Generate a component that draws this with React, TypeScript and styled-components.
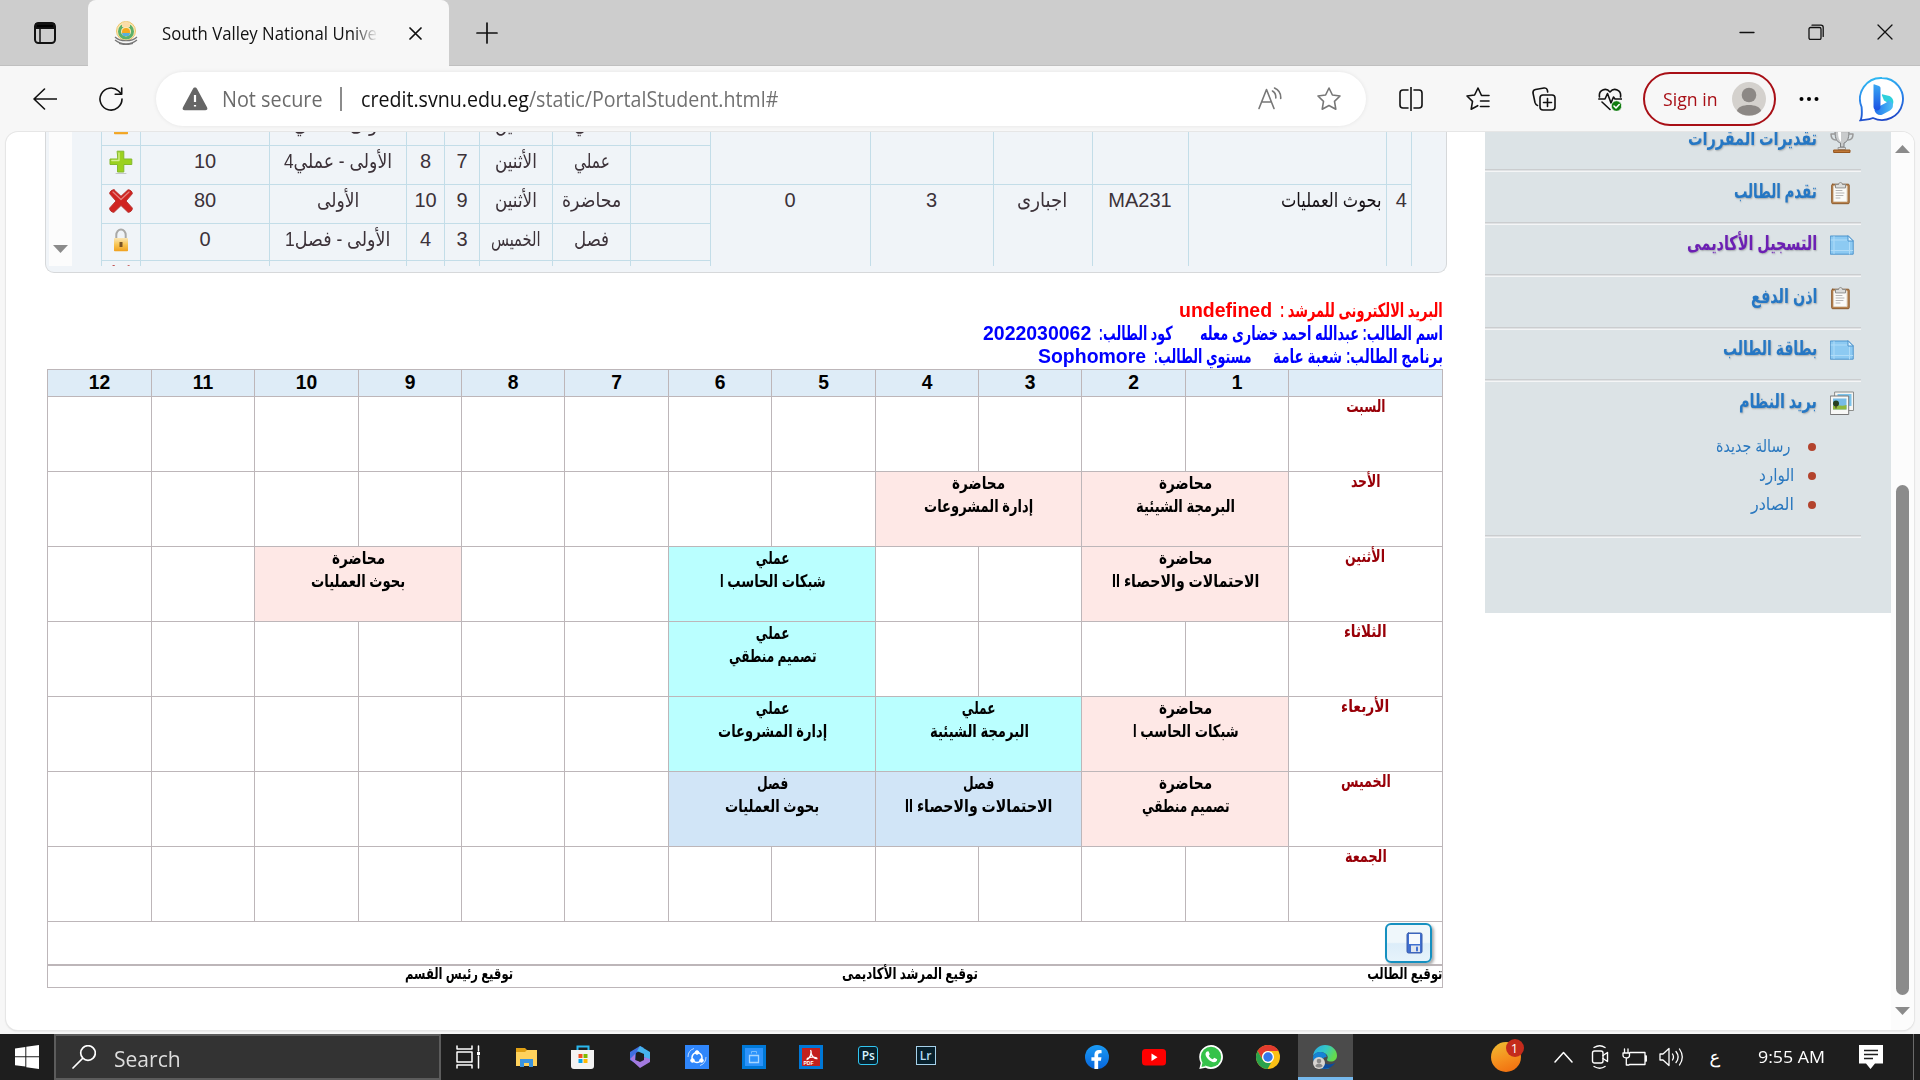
import React, { useLayoutEffect, useRef, useState } from 'react';
import styled, { createGlobalStyle, css } from 'styled-components';
import { FaFacebookF } from 'react-icons/fa';

const ARABIC = '"Liberation Sans", "DejaVu Sans", sans-serif';
const UI = '"Open Sans", "Noto Sans", "DejaVu Sans", sans-serif';

const GlobalStyle = createGlobalStyle`
  * { box-sizing: border-box; }
  html, body { margin: 0; padding: 0; background: #f7f7f7; overflow: hidden; }
  svg { display: block; flex: none; }
`;

/* ---------- text set to a known measure ---------- */

const Measure = styled.span<{ $w: number; $rtl?: boolean }>`
  display: inline-block;
  flex: none;
  width: ${p => p.$w}px;
  direction: ${p => (p.$rtl ? 'rtl' : 'ltr')};
  text-align: ${p => (p.$rtl ? 'right' : 'left')};
  white-space: nowrap;
`;
const Run = styled.span<{ $rtl?: boolean }>`
  display: inline-block;
  white-space: nowrap;
  transform-origin: ${p => (p.$rtl ? 'right' : 'left')} center;
`;

function Fit({ w, rtl, children }: { w: number; rtl?: boolean; children: React.ReactNode }) {
  const ref = useRef<HTMLSpanElement>(null);
  const [scale, setScale] = useState(1);
  useLayoutEffect(() => {
    if (ref.current && ref.current.offsetWidth) setScale(w / ref.current.offsetWidth);
  }, [w]);
  return (
    <Measure $w={w} $rtl={rtl}>
      <Run ref={ref} $rtl={rtl} style={{ transform: `scaleX(${scale})` }}>{children}</Run>
    </Measure>
  );
}

/* ---------- browser chrome ---------- */

const Screen = styled.div`
  width: 1920px;
  height: 1080px;
  display: flex;
  flex-direction: column;
  background: #f7f7f7;
  font-family: ${UI};
  overflow: hidden;
`;
const TabStrip = styled.div`
  height: 66px;
  flex: none;
  display: flex;
  background: #cdcdcd;
  box-shadow: inset 0 -1px 0 #c0c0c0;
`;
const TabActions = styled.div`
  width: 88px;
  padding: 22px 0 0 34px;
`;
const Tab = styled.div`
  width: 361px;
  height: 66px;
  display: flex;
  align-items: flex-start;
  background: #f7f7f7;
  border-radius: 8px 8px 0 0;
  padding: 21px 27px 0 26px;
`;
const TabTitle = styled.div`
  width: 216px;
  height: 26px;
  margin-left: 24px;
  font-size: 18px;
  line-height: 24px;
  color: #111;
  overflow: hidden;
  mask-image: linear-gradient(to right, #000 88%, transparent 100%);
`;
const TabClose = styled.div`
  margin: 6px 0 0 31px;
`;
const NewTab = styled.div`
  margin: 22px 0 0 27px;
`;
const WindowButtons = styled.div`
  margin-left: auto;
  display: flex;
  gap: 53px;
  padding: 24px 27px 0 0;
`;
const Toolbar = styled.div`
  height: 66px;
  flex: none;
  display: flex;
  align-items: center;
`;
const Tool = styled.div<{ $before: number }>`
  flex: none;
  margin-left: ${p => p.$before}px;
`;
const AddressBar = styled.div`
  flex: none;
  width: 1210px;
  height: 54px;
  margin-left: 33px;
  padding: 0 25px 0 26px;
  display: flex;
  align-items: center;
  background: #fff;
  border-radius: 27px;
  box-shadow: 0 0 4px rgba(0, 0, 0, 0.08);
  font-size: 21px;
  line-height: 28px;
`;
const Security = styled.div`
  margin-left: 14px;
  color: #6b6b6b;
`;
const Bar = styled.div`
  width: 2px;
  height: 24px;
  background: #8b8b8b;
  margin: 0 19px 0 17px;
`;
const Host = styled.span`
  color: #111;
`;
const UrlPath = styled.span`
  color: #717171;
`;
const AddressTools = styled.div`
  margin-left: auto;
  display: flex;
  gap: 35px;
`;
const SignIn = styled.div`
  flex: none;
  width: 133px;
  height: 54px;
  margin-left: 21px;
  padding: 0 8px 0 18px;
  display: flex;
  align-items: center;
  justify-content: space-between;
  border: 2px solid #a80f16;
  border-radius: 27px;
  color: #a80f16;
  font-size: 18px;
  line-height: 24px;
`;

/* ---------- page ---------- */

const Viewport = styled.div`
  width: 1908px;
  height: 898px;
  flex: none;
  margin: 0 6px 4px;
  display: flex;
  align-items: flex-start;
  background: #fff;
  border-radius: 12px;
  box-shadow: 0 0 0 1px #e6e6e6, 0 1px 2px #ccc;
  overflow: hidden;
`;
const Main = styled.div`
  width: 1479px;
  height: 898px;
  flex: none;
  padding-left: 39px;
`;
const RegistrationPanel = styled.div`
  width: 1402px;
  height: 141px;
  display: flex;
  padding-left: 3px;
  background: #f0f4f8;
  border: solid #d6d8da;
  border-width: 0 1px 1px;
  border-radius: 0 0 9px 9px;
  font-family: ${ARABIC};
  font-size: 20px;
  line-height: 24px;
  color: #3c3239;
`;
const PanelScroll = styled.div`
  width: 23px;
  height: 134px;
  background: #fcfcfc;
  display: flex;
  flex-direction: column;
  justify-content: flex-end;
  padding: 0 0 13px 4px;
  margin-right: 29px;
`;
const LINE = '#c3dde8';
const SessionGrid = styled.div`
  width: 609px;
  height: 134px;
  overflow: hidden;
`;
const SessionRow = styled.div<{ $h: number }>`
  display: grid;
  grid-template-columns: 39px 129px 137px 38px 35px 73px 78px 80px;
  grid-template-rows: ${p => p.$h - 1}px;
  height: ${p => p.$h}px;
  border-bottom: 1px solid ${LINE};
`;
const SessionCell = styled.div<{ $end?: boolean; $lift?: number }>`
  display: flex;
  min-height: 0;
  align-items: ${p => (p.$end ? 'flex-end' : 'center')};
  justify-content: center;
  padding-bottom: ${p => p.$lift ?? 6}px;
  border-left: 1px solid ${LINE};
  white-space: nowrap;
`;
const CourseGrid = styled.div`
  width: 702px;
  height: 134px;
  border-right: 1px solid ${LINE};
`;
const CourseRow = styled.div<{ $h: number; $line?: boolean }>`
  display: grid;
  grid-template-columns: 160px 123px 99px 96px 198px 25px;
  height: ${p => p.$h}px;
  ${p => p.$line && css`border-bottom: 1px solid ${LINE};`}
`;
const CourseCell = styled.div<{ $right?: boolean }>`
  border-left: 1px solid ${LINE};
  padding: 3px ${p => (p.$right ? 4 : 1)}px 0 0;
  text-align: ${p => (p.$right ? 'right' : 'center')};
  color: ${p => (p.$right ? '#151015' : 'inherit')};
`;

const StudentInfo = styled.div`
  width: 1398px;
  height: 96px;
  padding-top: 26px;
  font-family: ${ARABIC};
  font-weight: 700;
  font-size: 19.3px;
  line-height: 23px;
`;
const InfoLine = styled.div<{ $tone: string }>`
  display: flex;
  direction: rtl;
  height: 23px;
  color: ${p => p.$tone};
`;
const Gap = styled.span<{ $w: number }>`
  flex: none;
  width: ${p => p.$w}px;
`;

const EDGE = '#bdb6b9';
const Timetable = styled.div`
  width: 1396px;
  margin-left: 2px;
  border: 1px solid ${EDGE};
  font-family: ${ARABIC};
  font-weight: 700;
  color: #000;
`;
const WeekRow = styled.div<{ $head?: boolean }>`
  display: grid;
  direction: ltr;
  grid-template-columns: 104px 103px 104px 103px 103px 104px 103px 104px 103px 103px 104px 103px 153px;
  height: ${p => (p.$head ? 27 : 75)}px;
  background: ${p => (p.$head ? '#deecf7' : '#fff')};
  border-bottom: 1px solid ${EDGE};
`;
const HeadCell = styled.div`
  border-right: 1px solid ${EDGE};
  text-align: center;
  font-size: 19.3px;
  line-height: 25px;
  &:last-child { border-right: 0; }
`;
const tones = { plain: 'transparent', lecture: '#fee8e6', lab: '#baffff', section: '#d1e5f7' };
const SlotCell = styled.div<{ $tone: keyof typeof tones; $span: number }>`
  grid-column: span ${p => p.$span};
  display: flex;
  flex-direction: column;
  align-items: center;
  padding-left: 1px;
  background: ${p => tones[p.$tone]};
  border-right: 1px solid ${EDGE};
  font-size: 17.5px;
  line-height: 23px;
`;
const DayCell = styled.div`
  display: flex;
  justify-content: center;
  font-size: 17px;
  line-height: 20px;
  color: #980008;
`;
const SaveRow = styled.div`
  height: 44px;
  display: flex;
  justify-content: flex-end;
  padding: 1px 10px 0 0;
  border-bottom: 2px solid ${EDGE};
`;
const SaveButton = styled.div`
  width: 47px;
  height: 40px;
  display: flex;
  justify-content: flex-end;
  padding: 7px 7px 0 0;
  border: 2px solid #1590c0;
  border-radius: 6px;
  background: linear-gradient(#eff7fb 0 48%, #dcedf9 52%, #e6f3fb);
  box-shadow: 2px 2px 3px #aaa;
`;
const Signatures = styled.div`
  display: grid;
  direction: rtl;
  grid-template-columns: 464px 465px 465px;
  height: 21px;
  font-size: 16px;
  line-height: 16px;
`;

const Sidebar = styled.div`
  width: 406px;
  height: 481px;
  flex: none;
  background: #dce3e6;
  padding-right: 30px;
  font-family: ${ARABIC};
`;
const MenuItem = styled.div<{ $h: number }>`
  height: ${p => p.$h}px;
  display: flex;
  flex-direction: row-reverse;
  align-items: flex-start;
  padding-right: 7px;
  border-bottom: 1px solid #cbcdcf;
  box-shadow: 0 1px 0 #e0e2e4, 0 2px 0 #f4f5f6;
  font-weight: 700;
  font-size: 20px;
  line-height: 24px;
`;
const MenuIcon = styled.div<{ $top: number }>`
  width: 24px;
  margin-top: ${p => p.$top}px;
`;
const MenuLabel = styled.div<{ $top: number; $visited?: boolean }>`
  margin: ${p => p.$top}px 13px 0 0;
  color: ${p => (p.$visited ? '#6c1fb4' : '#2577c4')};
  text-shadow: 1px 1px 2px rgba(0, 0, 0, 0.25);
`;
const MailGroup = styled.div`
  height: 156px;
  border-bottom: 1px solid #cbcdcf;
  box-shadow: 0 1px 0 #e0e2e4, 0 2px 0 #f4f5f6;
`;
const MailHead = styled.div`
  display: flex;
  flex-direction: row-reverse;
  height: 52px;
  padding-right: 7px;
  font-weight: 700;
  font-size: 20px;
  line-height: 24px;
`;
const MailLink = styled.div`
  display: flex;
  flex-direction: row-reverse;
  align-items: center;
  height: 29px;
  padding-right: 45px;
  color: #2a78bf;
  font-size: 17.5px;
  line-height: 27px;
`;
const Bullet = styled.span`
  flex: none;
  width: 8px;
  height: 8px;
  border-radius: 4px;
  background: #b3432d;
  margin: 0 0 0 14px;
`;
const PageScroll = styled.div`
  width: 23px;
  height: 898px;
  background: #fcfcfc;
  display: flex;
  flex-direction: column;
  align-items: center;
  padding: 13px 4px 15px 3px;
  justify-content: space-between;
`;
const Thumb = styled.div`
  width: 13px;
  height: 510px;
  margin-top: 320px;
  border-radius: 7px;
  background: #8b8b8b;
`;

/* ---------- taskbar ---------- */

const Taskbar = styled.div`
  height: 46px;
  flex: none;
  display: flex;
  align-items: center;
  background: #1e1e1e;
  color: #fff;
`;
const SearchBox = styled.div`
  width: 387px;
  height: 46px;
  margin-left: 15px;
  display: flex;
  align-items: center;
  padding-left: 16px;
  background: #333;
  border: 2px solid #5c5c5c;
  font-size: 22px;
  line-height: 30px;
  color: #dedede;
`;
const SearchText = styled.div`
  margin: 2px 0 0 18px;
`;
const Tile = styled.div`
  width: 24px;
  height: 24px;
  display: flex;
  align-items: center;
  justify-content: center;
  flex: none;
`;
const Pinned = styled.div<{ $left: number; $gap: number }>`
  display: flex;
  margin-left: ${p => p.$left}px;
  gap: ${p => p.$gap}px;
`;
const AdobeTile = styled.div<{ $edge: string; $ink: string; $r: number }>`
  width: 20px;
  height: 19px;
  margin-bottom: 3px;
  border: 1px solid ${p => p.$edge};
  border-radius: ${p => p.$r}px;
  background: #07202c;
  color: ${p => p.$ink};
  display: flex;
  justify-content: center;
  font-size: 12px;
  line-height: 17px;
  font-weight: 600;
`;
const Round = styled.div`
  width: 24px;
  height: 24px;
  border-radius: 50%;
  background: linear-gradient(#1a9bf5, #0866dc);
  display: flex;
  align-items: flex-end;
  justify-content: center;
  color: #fff;
`;
const ActiveApp = styled.div`
  width: 55px;
  height: 46px;
  margin-left: 18px;
  display: flex;
  justify-content: center;
  padding-top: 11px;
  background: #4b4b4b;
  border-bottom: 3px solid #76b9ed;
`;
const Alert = styled.div`
  position: relative;
  width: 30px;
  height: 30px;
  margin-left: 138px;
  border-radius: 50%;
  background: linear-gradient(160deg, #efb52f 10%, #f5921f 50%, #f0680c);
`;
const Badge = styled.div`
  position: absolute;
  left: 15px;
  top: -3px;
  width: 18px;
  height: 18px;
  border-radius: 50%;
  background: #c42b1c;
  font-size: 13px;
  line-height: 18px;
  text-align: center;
`;
const Lang = styled.div`
  margin-left: 27px;
  font-family: "DejaVu Sans", sans-serif;
  font-size: 18px;
  line-height: 24px;
`;
const Clock = styled.div`
  margin-left: 38px;
  font-size: 17px;
  line-height: 24px;
`;
const ShowDesktop = styled.div`
  width: 1px;
  height: 46px;
  margin-left: 30px;
  background: #6a6a6a;
`;

/* ---------- icons ---------- */

type SvgProps = { w?: number; h?: number; c?: string; s?: number; children: React.ReactNode };
const Svg = ({ w = 24, h = 24, c = '#111', s = 1.6, children }: SvgProps) => (
  <svg width={w} height={h} viewBox={`0 0 ${w} ${h}`} fill="none" stroke={c} strokeWidth={s} strokeLinecap="round" strokeLinejoin="round">{children}</svg>
);

const Clipboard = () => (
  <Svg s={1}>
    <rect x="1.700" y="3.200" width="17.500" height="19.500" rx="1" fill="#b98450" stroke="#8a5a2c" />
    <rect x="4" y="5" width="13" height="15.500" fill="#fbfbf8" stroke="#e0d6c6" />
    <path d="M5.500 6.500V3.500h3C9 .8 12 .8 12.500 3.500h3v3z" fill="#dcdddb" stroke="#8d8d8a" />
    <path d="M6 9.500h6M6 12h8M6 14.500h7M6 17h4" stroke="#b5b5b5" />
  </Svg>
);
const Blueprint = () => (
  <Svg h={20} s={1}>
    <path d="M.7 1h17.500l5 5v13.200H.7z" fill="#8dcaf2" stroke="#4d94cd" />
    <path d="M4 1.500v17M1.200 5h16M1.200 15.500h21.500M19.500 7v12" stroke="#b0dcf8" />
    <path d="M18 1v5h5z" fill="#dff2fd" stroke="#4d94cd" />
  </Svg>
);
const Trophy = () => (
  <Svg h={22} s={1}>
    <path d="M5 0C5 7 7 10 10.500 11v4h3.500v-4C17 10 19 7 19 0z" fill="#c9cbcc" stroke="#7d7f80" />
    <path d="M8 0c0 5 1 8 3 10V0z" fill="#fff" stroke="none" />
    <path d="M5 2H1c0 4 2 6 5 6M19 2h4c0 4-2 6-5 6" stroke="#999" strokeWidth="1.500" />
    <path d="M8.500 15.500h7v2h-7z" fill="#ddd" stroke="#999" />
    <path d="M4 18h16v2.500H4z" fill="#bf7838" stroke="#96571f" />
  </Svg>
);
const Pictures = () => (
  <Svg s={1}>
    <rect x="5" y="1" width="18.500" height="18.500" fill="#f5f5f3" stroke="#8c8e8c" />
    <rect x="7.500" y="3" width="14" height="12" fill="#7cc4ec" stroke="none" />
    <rect x=".7" y="5" width="18" height="18.500" fill="#f8f8f6" stroke="#777" />
    <rect x="3" y="7.500" width="13.500" height="11" fill="#76bbe6" stroke="none" />
    <path d="M3 15c5-2 8 1 13.500-1v4.500H3z" fill="#90b83c" stroke="none" />
    <circle cx="6" cy="12.500" r="3" fill="#254222" stroke="none" />
    <path d="M6 13v4" stroke="#3f3218" />
  </Svg>
);
const Lock = () => (
  <svg width="16" height="24" viewBox="0 0 16 24" fill="none">
    <defs>
      <linearGradient id="brass" x1="0" y1="0" x2="0" y2="1"><stop offset="0" stopColor="#fbe6b4" /><stop offset=".5" stopColor="#f8c552" /><stop offset="1" stopColor="#f0a01e" /></linearGradient>
    </defs>
    <path d="M3.300 11V7a4.700 5.500 0 0 1 9.400 0v4" stroke="#a9a9a7" strokeWidth="2" />
    <rect x="1" y="10" width="14" height="13.300" rx=".8" fill="url(#brass)" />
    <path d="M8 14v5" stroke="#7a5426" strokeWidth="3" />
  </svg>
);
const Plus = () => (
  <Svg s={1}>
    <path d="M8.500 1.200h6.300V9h8v5.500h-8V22H8.500v-7.500H1V9h7.500z" fill="#9bd11f" stroke="#82b92b" />
    <path d="M10 2.800v7.700H2.800" stroke="#d6f093" strokeWidth="1.300" />
    <path d="M7 23.500h10" stroke="#c3c6c8" />
  </Svg>
);
const Cross = () => (
  <Svg s={1}>
    <path d="M5 .8l7 6.500 7-6.500c2.500 0 4.500 2 4.300 4L17 12l6.300 7c.2 2.500-1.800 4.300-4.300 4.300l-7-6.800-7 6.800c-2.500 0-4.500-1.800-4.300-4.300L7 12 .7 4.800C.5 2.800 2.500.8 5 .8z" fill="#d02320" stroke="#b83532" />
    <path d="M4 3l8 7.500L20 3" stroke="#e58480" strokeWidth="1.300" />
  </Svg>
);
const Caret = ({ up }: { up?: boolean }) => (
  <svg width={15} height={8} viewBox="0 0 15 8"><path d={up ? 'M0 8L7.500 0L15 8z' : 'M0 0h15L7.500 8z'} fill="#8b8b8b" /></svg>
);
const Edge = () => (
  <svg width="24" height="24" viewBox="0 0 24 24">
    <defs>
      <linearGradient id="edgeTop" x1="0" y1="0" x2="1" y2="0.4"><stop offset="0" stopColor="#28a8e8" /><stop offset="0.55" stopColor="#35c8c4" /><stop offset="1" stopColor="#65da4c" /></linearGradient>
    </defs>
    <path d="M0 11C1 4 6 0 12 0c7 0 12 5 12 10.500 0 4-3 6-6 6-4 0-4.500-1.500-3.500-3C16 11 12 7 8 7 4 7 1 9 0 11z" fill="url(#edgeTop)" />
    <path d="M0 12c1-3.500 4-5.500 8-5 4 .3 6 3 5.500 5C10 12 8.500 15 10 18c1.200 3.500 4 5.500 7 5C10 26 0 22 0 12z" fill="#1583d6" />
    <path d="M10 12.500C8 18 14 22 22.500 17.500 19 22.500 14 24.500 10 23.500 5 21 6 14 10 12.500z" fill="#0c4b9c" />
    <circle cx="6" cy="18" r="6" fill="#d8d5d2" />
    <circle cx="6" cy="16" r="2.300" fill="#888" /><path d="M2.300 21c1-3.500 6.400-3.500 7.400 0-2 2-5.400 2-7.400 0z" fill="#888" />
  </svg>
);
const Bing = () => (
  <svg width="45" height="46" viewBox="0 0 45 46">
    <defs>
      <linearGradient id="bubble" x1="0.3" y1="0" x2="0.5" y2="1"><stop offset="0" stopColor="#2fb9f2" /><stop offset=".5" stopColor="#2a83ea" /><stop offset="1" stopColor="#1f48c8" /></linearGradient>
      <linearGradient id="stem" x1="0" y1="0" x2="0" y2="1"><stop offset="0" stopColor="#3aa9f4" /><stop offset="1" stopColor="#1c4fe2" /></linearGradient>
      <linearGradient id="bowl" x1="0" y1="0" x2="1" y2="0"><stop offset="0" stopColor="#2173ec" /><stop offset="1" stopColor="#4ec0f6" /></linearGradient>
    </defs>
    <path d="M23 2a21 21 0 1 1-9 40c-4 2-8 1.600-12.500 2.200C3.200 41.500 3 36 2.600 31A21 21 0 0 1 23 2z" fill="#fff" stroke="url(#bubble)" strokeWidth="1.900" />
    <path d="M24 18.500c-1-.6-1.300.3-1 1l2 5 8.500 5c2-4 .5-7.500-3-9.500z" fill="#2dd0dc" />
    <path d="M17 32l9.500-5c2-1 2.500-2 2.500-3l3 1.800c3 2.500 2.500 6.500-1 8.700L23.500 38.500c-3.500 1.800-7-1-8-4z" fill="url(#bowl)" />
    <path d="M15 8.300l5 1.800c1 .4 1.500 1.200 1.500 2.400V31c0 2-1.500 3.500-3.500 3.500-2.500 0-3.500-2-3.500-4V9c0-.5.200-.8.500-.7z" fill="url(#stem)" />
  </svg>
);

/* ---------- data ---------- */

type Txt = [string, number];
const sessions: { icon: React.ReactNode; cap: string; group: Txt; to: string; from: string; day: Txt; kind: Txt }[] = [
  { icon: <Plus />, cap: '10', group: ['الأولى - عملي4', 108], to: '8', from: '7', day: ['الأثنين', 42], kind: ['عملي', 36] },
  { icon: <Cross />, cap: '80', group: ['الأولى', 42], to: '10', from: '9', day: ['الأثنين', 42], kind: ['محاضرة', 59] },
  { icon: <Lock />, cap: '0', group: ['الأولى - فصل1', 105], to: '4', from: '3', day: ['الخميس', 50], kind: ['فصل', 35] },
];

type Slot = { span: number; tone: keyof typeof tones; kind?: Txt; name?: Txt };
const empty = (n: number): Slot[] => Array.from({ length: n }, () => ({ span: 1, tone: 'plain' as const }));
const lecture = (name: Txt): Slot => ({ span: 2, tone: 'lecture', kind: ['محاضرة', 53], name });
const lab = (name: Txt): Slot => ({ span: 2, tone: 'lab', kind: ['عملي', 34], name });
const section = (name: Txt): Slot => ({ span: 2, tone: 'section', kind: ['فصل', 31], name });

const OOP: Txt = ['البرمجة الشيئية', 99];
const PM: Txt = ['إدارة المشروعات', 109];
const STAT: Txt = ['الاحتمالات والاحصاء II', 147];
const NET: Txt = ['شبكات الحاسب I', 106];
const OR: Txt = ['بحوث العمليات', 94];
const LOGIC: Txt = ['تصميم منطقي', 88];

const week: { day: Txt; slots: Slot[] }[] = [
  { day: ['السبت', 39], slots: empty(12) },
  { day: ['الأحد', 30], slots: [...empty(8), lecture(PM), lecture(OOP)] },
  { day: ['الأثنين', 40], slots: [...empty(2), lecture(OR), ...empty(2), lab(NET), ...empty(2), lecture(STAT)] },
  { day: ['الثلاثاء', 43], slots: [...empty(6), lab(LOGIC), ...empty(4)] },
  { day: ['الأربعاء', 48], slots: [...empty(6), lab(PM), lab(OOP), lecture(NET)] },
  { day: ['الخميس', 50], slots: [...empty(6), section(OR), section(STAT), lecture(LOGIC)] },
  { day: ['الجمعة', 42], slots: empty(12) },
];

const menu: { label: Txt; icon: React.ReactNode; h: number; iconTop: number; top: number; visited?: boolean }[] = [
  { label: ['تقديرات المقررات', 129], icon: <Trophy />, h: 38, iconTop: 0, top: -6 },
  { label: ['تقدم الطالب', 83], icon: <Clipboard />, h: 53, iconTop: 11, top: 9 },
  { label: ['التسجيل الأكاديمى', 130], icon: <Blueprint />, h: 52, iconTop: 12, top: 8, visited: true },
  { label: ['اذن الدفع', 66], icon: <Clipboard />, h: 53, iconTop: 11, top: 9 },
  { label: ['بطاقة الطالب', 94], icon: <Blueprint />, h: 52, iconTop: 12, top: 8 },
];

export default function App() {
  return (
    <Screen>
      <GlobalStyle />
      <TabStrip>
        <TabActions>
          <Svg w={22} h={22} s={2}><rect x="1" y="1" width="20" height="20" rx="3.500" /><path d="M2 2h18v4H2z" fill="#000" /><path d="M6 6v15" strokeWidth="1.500" /></Svg>
        </TabActions>
        <Tab>
          <svg width="24" height="24" viewBox="0 0 24 24" fill="none">
            <circle cx="12" cy="10" r="9.500" fill="#fbe7b6" stroke="#efc568" />
            <circle cx="12" cy="10.500" r="6.500" stroke="#5bb06a" strokeWidth="3" />
            <circle cx="12" cy="11" r="4" fill="#f5a91d" /><path d="M8 12h8l-1 3H9z" fill="#58b1dc" /><path d="M8 3l4-3 4 3v3H8z" fill="#fbdca8" />
            <path d="M1 16c5 5 17 5 22 0M1 19c6 5 16 5 22 0M5 22.500c5 1.500 9 1.500 14 0" stroke="#777" strokeWidth="1.200" />
          </svg>
          <TabTitle><Fit w={215}>South Valley National Unive</Fit></TabTitle>
          <TabClose><Svg w={13} h={13} s={1.700}><path d="M1 1l11 11M12 1L1 12" /></Svg></TabClose>
        </Tab>
        <NewTab><Svg w={22} h={22} s={1.700}><path d="M11 1v20M1 11h20" /></Svg></NewTab>
        <WindowButtons>
          <Svg w={16} h={16} s={1.300}><path d="M1 8.500h14" /></Svg>
          <Svg w={16} h={16} s={1.300}><rect x="1" y="3.500" width="12" height="12" rx="1.500" /><path d="M4 1.200h9c1.500 0 2.200.8 2.200 2.200v9" /></Svg>
          <Svg w={16} h={16} s={1.300}><path d="M1 1l14 14M15 1L1 15" /></Svg>
        </WindowButtons>
      </TabStrip>

      <Toolbar>
        <Tool $before={33}><Svg><path d="M11.500 2L1 12l10.500 10M1 12h22.500" /></Svg></Tool>
        <Tool $before={42}><Svg><path d="M23 12A11 11 0 1 1 19.500 4l3 3M22.700 1v6.300h-6.500" /></Svg></Tool>
        <AddressBar>
          <svg width="26" height="24" viewBox="0 0 26 24"><path d="M13 .5c1 0 1.600.5 2 1.200l10 18.500c1 1.800 0 3-1.800 3H2.800c-1.800 0-2.800-1.200-1.800-3L11 1.700c.4-.7 1-1.200 2-1.200z" fill="#666" /><path d="M13 8v7M13 18v1.500" stroke="#fff" strokeWidth="2.200" /></svg>
          <Security><Fit w={101}>Not secure</Fit></Security>
          <Bar />
          <Fit w={417}><Host>credit.svnu.edu.eg</Host><UrlPath>/static/PortalStudent.html#</UrlPath></Fit>
          <AddressTools>
            <Svg c="#777"><path d="M1 21.500L8.500 2.500 16 21.500M3.500 15h10M14.500 4c2.500 1.500 3.500 4 3.300 7M16.500 1c4.500 2 6.500 6 6.200 10.500" /></Svg>
            <Svg c="#777"><path d="M12 1l3.400 7 7.600 1-5.500 5.300 1.300 7.900L12 18.500l-6.800 3.700 1.300-7.900L1 9l7.600-1z" /></Svg>
          </AddressTools>
        </AddressBar>
        <Tool $before={33}><Svg><path d="M12 0v24M9 3H4C2 3 1 4 1 6v12c0 2 1 3 3 3h5M15 3h5c2 0 3 1 3 3v12c0 2-1 3-3 3h-5" /></Svg></Tool>
        <Tool $before={43}><Svg><path d="M23 8.500h-7.500L12 1 8.600 8 1 9l5.500 5.300-1.300 7.900 6.500-3.500M14.500 14H23M14.500 19.500H23" /></Svg></Tool>
        <Tool $before={42}><Svg><rect x="8" y="8" width="15" height="15" rx="3" /><path d="M15.500 11.500v8M11.500 15.500h8M5.500 18.500C4 18 3.500 17 3 15.500L1 6C.8 4 1.500 3 3.500 2.500L12 1c2-.3 3 .6 3.300 2l.4 2" /></Svg></Tool>
        <Tool $before={42}>
          <Svg><path d="M1.500 10C.3 3 8 0 12 5c4-5 11.700-2 10.500 5M.8 12H7l2.500-5.500L13 16l2.500-6 1.500 2h6.500M4 15l8 7.500" /><circle cx="18.500" cy="19" r="5.200" fill="#107c10" stroke="#fff" strokeWidth=".6" /><path d="M16 19l2 2 3.200-3.500" stroke="#fff" /></Svg>
        </Tool>
        <SignIn>
          <Fit w={55}>Sign in</Fit>
          <svg width="34" height="34" viewBox="0 0 34 34"><circle cx="17" cy="17" r="17" fill="#d4d1cd" /><circle cx="17" cy="13" r="7.300" fill="#8c8885" /><path d="M5 29c1-8 23-8 24 0-6 6-18 6-24 0z" fill="#8c8885" /></svg>
        </SignIn>
        <Tool $before={23}><svg width="20" height="6" viewBox="0 0 20 6"><circle cx="2.500" cy="3" r="2" /><circle cx="10" cy="3" r="2" /><circle cx="17.500" cy="3" r="2" /></svg></Tool>
        <Tool $before={40}><Bing /></Tool>
      </Toolbar>

      <Viewport>
        <Main>
          <RegistrationPanel>
            <PanelScroll><Caret /></PanelScroll>
            <SessionGrid>
              <SessionRow $h={14}>
                <SessionCell $end $lift={10}><Lock /></SessionCell><SessionCell />
                <SessionCell $end $lift={9}><Fit w={108} rtl>الأولى - عملي4</Fit></SessionCell><SessionCell /><SessionCell />
                <SessionCell $end $lift={9}><Fit w={42} rtl>الأثنين</Fit></SessionCell>
                <SessionCell $end $lift={9}><Fit w={36} rtl>عملي</Fit></SessionCell><SessionCell />
              </SessionRow>
              {sessions.map((s, i) => {
                const last = i === 2;
                const lift = last ? 6 : 8;
                return (
                  <SessionRow key={i} $h={last ? 37 : 39}>
                    <SessionCell $lift={last ? 4 : 6}>{s.icon}</SessionCell>
                    <SessionCell $lift={lift}>{s.cap}</SessionCell>
                    <SessionCell $lift={lift}><Fit w={s.group[1]} rtl>{s.group[0]}</Fit></SessionCell>
                    <SessionCell $lift={lift}>{s.to}</SessionCell>
                    <SessionCell $lift={lift}>{s.from}</SessionCell>
                    <SessionCell $lift={lift}><Fit w={s.day[1]} rtl>{s.day[0]}</Fit></SessionCell>
                    <SessionCell $lift={lift}><Fit w={s.kind[1]} rtl>{s.kind[0]}</Fit></SessionCell>
                    <SessionCell />
                  </SessionRow>
                );
              })}
              <SessionRow $h={39}>
                <SessionCell $lift={6}><Cross /></SessionCell><SessionCell /><SessionCell /><SessionCell /><SessionCell /><SessionCell /><SessionCell /><SessionCell />
              </SessionRow>
            </SessionGrid>
            <CourseGrid>
              <CourseRow $h={53} $line>
                <CourseCell /><CourseCell /><CourseCell /><CourseCell /><CourseCell /><CourseCell />
              </CourseRow>
              <CourseRow $h={81}>
                <CourseCell>0</CourseCell>
                <CourseCell>3</CourseCell>
                <CourseCell><Fit w={50} rtl>اجبارى</Fit></CourseCell>
                <CourseCell>MA231</CourseCell>
                <CourseCell $right><Fit w={101} rtl>بحوث العمليات</Fit></CourseCell>
                <CourseCell>&nbsp;4</CourseCell>
              </CourseRow>
            </CourseGrid>
          </RegistrationPanel>

          <StudentInfo>
            <InfoLine $tone="#fe0000">
              <Fit w={163} rtl>البريد الالكترونى للمرشد :</Fit><Gap $w={8} /><Fit w={93}>undefined</Fit>
            </InfoLine>
            <InfoLine $tone="#0000fe">
              <Fit w={243} rtl>اسم الطالب: عبدالله احمد خضارى معله</Fit><Gap $w={28} /><Fit w={74} rtl>كود الطالب:</Fit><Gap $w={7} /><Fit w={108}>2022030062</Fit>
            </InfoLine>
            <InfoLine $tone="#0000fe">
              <Fit w={170} rtl>برنامج الطالب: شعبة عامة</Fit><Gap $w={22} /><Fit w={98} rtl>مستوي الطالب:</Fit><Gap $w={7} /><Fit w={108}>Sophomore</Fit>
            </InfoLine>
          </StudentInfo>

          <Timetable>
            <WeekRow $head>
              {[12, 11, 10, 9, 8, 7, 6, 5, 4, 3, 2, 1].map(n => <HeadCell key={n}>{n}</HeadCell>)}
              <HeadCell />
            </WeekRow>
            {week.map(({ day, slots }) => (
              <WeekRow key={day[0]}>
                {slots.map((s, i) => (
                  <SlotCell key={i} $tone={s.tone} $span={s.span}>
                    {s.kind && <Fit w={s.kind[1]} rtl>{s.kind[0]}</Fit>}
                    {s.name && <Fit w={s.name[1]} rtl>{s.name[0]}</Fit>}
                  </SlotCell>
                ))}
                <DayCell><Fit w={day[1]} rtl>{day[0]}</Fit></DayCell>
              </WeekRow>
            ))}
            <SaveRow>
              <SaveButton>
                <Svg w={17} h={22} s={1}>
                  <rect x="1" y="1" width="15" height="20" rx="1.500" fill="#3f6fd0" stroke="#3a5cab" />
                  <rect x="3" y="2" width="11" height="10" fill="#f6f9fd" stroke="none" />
                  <rect x="5" y="13.500" width="9" height="6.500" fill="#dfe5ee" stroke="none" /><path d="M11 15.500v3" stroke="#3f6fd0" strokeWidth="2" />
                </Svg>
              </SaveButton>
            </SaveRow>
            <Signatures>
              <Fit w={75} rtl>توقيع الطالب</Fit>
              <Fit w={136} rtl>توقيع المرشد الأكاديمى</Fit>
              <Fit w={108} rtl>توقيع رئيس القسم</Fit>
            </Signatures>
          </Timetable>
        </Main>

        <Sidebar>
          {menu.map(m => (
            <MenuItem key={m.label[0]} $h={m.h}>
              <MenuIcon $top={m.iconTop}>{m.icon}</MenuIcon>
              <MenuLabel $top={m.top} $visited={m.visited}><Fit w={m.label[1]} rtl>{m.label[0]}</Fit></MenuLabel>
            </MenuItem>
          ))}
          <MailGroup>
            <MailHead>
              <MenuIcon $top={11}><Pictures /></MenuIcon>
              <MenuLabel $top={9}><Fit w={78} rtl>بريد النظام</Fit></MenuLabel>
            </MailHead>
            <MailLink><Bullet /><Gap $w={4} /><Fit w={74} rtl>رسالة جديدة</Fit></MailLink>
            <MailLink><Bullet /><Fit w={35} rtl>الوارد</Fit></MailLink>
            <MailLink><Bullet /><Fit w={43} rtl>الصادر</Fit></MailLink>
          </MailGroup>
        </Sidebar>
        <PageScroll><Caret up /><Thumb /><Caret /></PageScroll>
      </Viewport>

      <Taskbar>
        <Pinned $left={15} $gap={0}>
          <svg width="24" height="24" viewBox="0 0 24 24" fill="#fff"><path d="M0 3.500L10.300 2v9.300H0zM11.300 1.800L24 0v11.300H11.300zM0 12.300h10.300v9.200L0 20.200zM11.300 12.300H24V24l-12.700-1.800z" /></svg>
        </Pinned>
        <SearchBox>
          <Svg c="#fff" s={1.700}><circle cx="16" cy="8" r="7.300" /><path d="M10.500 13.500L1 23" /></Svg>
          <SearchText><Fit w={67}>Search</Fit></SearchText>
        </SearchBox>
        <Pinned $left={15} $gap={33.2}>
          <Svg c="#fff" s={1.500}><path d="M1 1v3h15V1M1 23v-3h15v3M1 7h15v10H1zM22.500 1v5M22.500 11v12" /><path d="M21 7h3v3h-3z" fill="#fff" stroke="none" /></Svg>
          <svg width="24" height="24" viewBox="0 0 24 24"><path d="M3 3h9l2 2h11v16H3z" fill="#e0a014" /><path d="M3 7h9l2-2h10v16H3z" fill="#ffd25c" /><path d="M7 14h13v8h-4v-4h-5v4H7z" fill="#3b94df" /></svg>
          <svg width="24" height="24" viewBox="0 0 24 24"><path d="M7.500 6V1.500h11V6" fill="none" stroke="#29b7ee" strokeWidth="2" /><path d="M1 5h23v16q0 3-3 3H4q-3 0-3-3z" fill="#f3f3f3" /><path d="M8.500 9h4v4h-4z" fill="#f25022" /><path d="M13.500 9h4v4h-4z" fill="#7fba00" /><path d="M8.500 14h4v4h-4z" fill="#00a4ef" /><path d="M13.500 14h4v4h-4z" fill="#ffb900" /></svg>
          <svg width="24" height="24" viewBox="0 0 24 24"><path d="M12 1L2 7v8l5 3 1-10 8-5z" fill="#3f6fe0" /><path d="M12 1l10 6v9l-6-4V9L9 6z" fill="#46b4ee" /><path d="M2 14l10 9 10-6v-3l-6-2-4 4-5-1V9z" fill="#a37ae0" /><path d="M12 8l4 2v5l-4 2-4-2v-5z" fill="#1e1e1e" /></svg>
          <svg width="24" height="24" viewBox="0 0 24 24" fill="none" stroke="#fff"><rect width="24" height="24" fill="#2f86fb" stroke="none" /><circle cx="12" cy="12.500" r="5" strokeWidth="1.500" /><path d="M3 12a9 9 0 0 1 6-8.500M21 12a9 9 0 0 1-6 8.500" opacity=".7" /><circle cx="12" cy="7.500" r="1.800" fill="#fff" /><circle cx="7.500" cy="15.500" r="1.800" fill="#fff" /><circle cx="16.500" cy="15.500" r="1.800" fill="#fff" /></svg>
          <svg width="24" height="24" viewBox="0 0 24 24"><rect width="24" height="24" fill="#0078d7" /><rect x="3" y="3" width="18" height="18" fill="#2c93fb" /><path d="M7.500 10.500h9v7h-9z" fill="none" stroke="#a6d5ff" strokeWidth="1.300" /><path d="M9.500 8.500v-2h5v2" fill="none" stroke="#7cc0fd" strokeWidth="1" /></svg>
          <svg width="24" height="24" viewBox="0 0 24 24"><rect width="24" height="24" fill="#0078d7" /><rect x="3" y="3" width="18" height="18" fill="#c3201d" /><path d="M11.500 5c2 3-1 9-4 9.500M12 8c1 4 4 6 6.500 5.500M8 13.500c3-1.500 6-2 10-.5" fill="none" stroke="#fff" strokeWidth="1.300" /><text x="4.500" y="20" fontSize="5" fontWeight="700" fill="#fff" fontFamily="Liberation Sans">PDF</text></svg>
          <Tile><AdobeTile $edge="#31c5f0" $ink="#d7f4ff" $r={3}>Ps</AdobeTile></Tile>
          <Tile><AdobeTile $edge="#a6d1ea" $ink="#b5dcf2" $r={0}>Lr</AdobeTile></Tile>
        </Pinned>
        <Pinned $left={147} $gap={33}>
          <Round><FaFacebookF size={19} /></Round>
          <svg width="24" height="24" viewBox="0 0 24 24"><rect y="4" width="24" height="16.500" rx="3.500" fill="#fe0000" /><path d="M9.500 8.500l6 3.700-6 3.700z" fill="#fff" /></svg>
          <svg width="24" height="24" viewBox="0 0 24 24"><path d="M12 0a12 12 0 1 1-5.500 22.700L.3 24l1.500-6A12 12 0 0 1 12 0z" fill="#fff" /><circle cx="12" cy="12" r="10.200" fill="#35c24a" /><path d="M2.500 22l1-5 3.500 4z" fill="#35c24a" /><path d="M8 6.500l1.500-.3 1.300 3-1 1.500c1 1.800 2.200 2.800 4 3.600l1.400-1.500 3 1.400c0 2-1.600 3-3.200 3C11 17 7 12.500 6.500 9.500 6.500 8 7 7 8 6.500z" fill="#fff" /></svg>
          <svg width="24" height="24" viewBox="0 0 24 24"><circle cx="12" cy="12" r="12" fill="#fbc116" /><path d="M1.600 6A12 12 0 0 1 22.400 6H12a6 6 0 0 0-5.200 9z" fill="#e33b2e" /><path d="M1.600 6l5.200 9A6 6 0 0 0 12 18h3L11.500 24A12 12 0 0 1 1.600 6z" fill="#2aa24c" /><circle cx="12" cy="12" r="6" fill="#fff" /><circle cx="12" cy="12" r="4.700" fill="#3477e8" /></svg>
        </Pinned>
        <ActiveApp><Edge /></ActiveApp>
        <Alert><Badge>1</Badge></Alert>
        <Tool $before={33}><Svg w={19} h={12} c="#fff" s={1.500}><path d="M1 11l8.500-9.500L18 11" /></Svg></Tool>
        <Tool $before={18}><Svg w={18} c="#fff" s={1.400}><rect x="1.500" y="6" width="10.500" height="12" rx="2" /><path d="M12 10.500l4.500-3v9l-4.500-3M3 2.500c3.500-2 8-2 11 0M3 21.500c3.500 2 8 2 11 0" /></Svg></Tool>
        <Tool $before={13}><Svg w={25} h={18} c="#fff" s={1.300}><path d="M8 4.500h15v12H7.500M23 8h1.300v5H23M2.500 1v4M6 1v4M1 5h6.500v2.500C7.500 9 6 10 4.300 10S1 9 1 7.500zM4.300 10v7H7" /></Svg></Tool>
        <Tool $before={12}><Svg w={24} h={20} c="#fff" s={1.300}><path d="M1 7h3l6-5.500v17L4 13H1zM13.500 7c1.300 2 1.300 4 0 6M17 4.500c2.700 3.500 2.700 7.500 0 11M20.500 2c3.500 5 3.500 11 0 16" /></Svg></Tool>
        <Lang>ع</Lang>
        <Clock><Fit w={67}>9:55 AM</Fit></Clock>
        <Tool $before={34}><svg width="24" height="24" viewBox="0 0 24 24"><path d="M0 0h24v18.500h-8L11.500 24 7 18.500H0z" fill="#fff" /><path d="M5 5.500h14M5 9.500h14M5 13.500h9" stroke="#1e1e1e" strokeWidth="1.400" /></svg></Tool>
        <ShowDesktop />
      </Taskbar>
    </Screen>
  );
}
